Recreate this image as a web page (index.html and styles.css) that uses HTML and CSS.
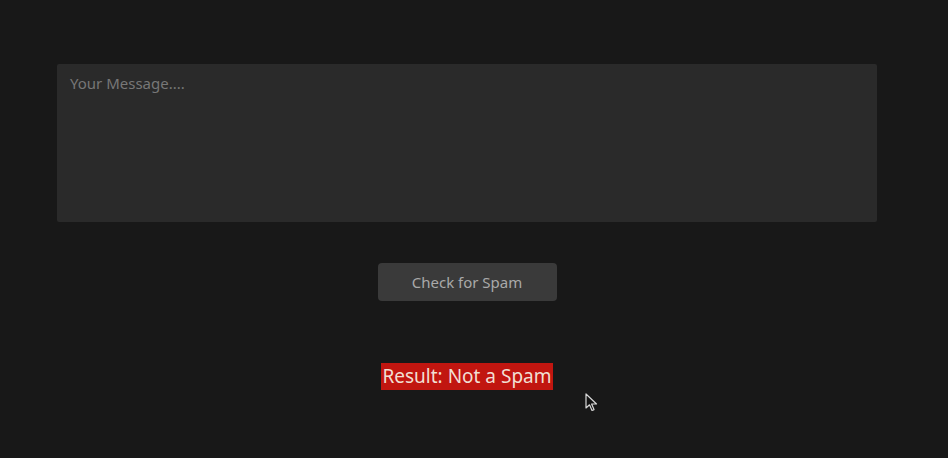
FILE: index.html
```html
<!DOCTYPE html>
<html lang="en">
<head>
<meta charset="utf-8">
<title>Spam Checker</title>
<link rel="stylesheet" href="styles.css">
</head>
<body>
<main class="app">
  <textarea class="message" placeholder="Your Message...."></textarea>
  <button class="check" type="button">Check for Spam</button>
  <p class="result"><span class="result-text">Result: Not a Spam</span></p>
</main>
<svg class="cursor" width="14" height="20" viewBox="0 0 14 20" aria-hidden="true">
  <path d="M1 1 L1 15 L4.5 11.8 L7 17.5 L9 16.6 L6.6 11 L11.5 11 Z" fill="#141414" stroke="#d8d8d8" stroke-width="1.2" stroke-linejoin="round"/>
</svg>
</body>
</html>
```
FILE: styles.css
```css
html, body {
  margin: 0;
  padding: 0;
  background: #181818;
  height: 100%;
}
body {
  font-family: "Noto Sans", "Open Sans", sans-serif;
  width: 934px;
  position: relative;
}
.app {
  display: flex;
  flex-direction: column;
  align-items: center;
  padding-top: 64px;
}
.message {
  box-sizing: border-box;
  width: 820px;
  height: 158px;
  background: #2a2a2a;
  border: none;
  border-radius: 2px;
  padding: 9px 13px;
  color: #bbb;
  font-family: inherit;
  font-size: 15px;
  resize: none;
  outline: none;
}
.message::placeholder {
  color: #777;
}
.check {
  margin-top: 41px;
  box-sizing: border-box;
  width: 179px;
  height: 38px;
  background: #3a3a3a;
  border: none;
  border-radius: 4px;
  color: #a9a9a9;
  font-family: inherit;
  font-size: 15px;
  padding: 0;
}
.result {
  margin: 62px 0 0;
  line-height: 1;
}
.result-text {
  display: inline-block;
  background: #c11610;
  color: #f1dfd3;
  font-size: 19px;
  line-height: 27px;
  padding: 0 1px;
}
.cursor {
  position: absolute;
  left: 585px;
  top: 393px;
}
```
